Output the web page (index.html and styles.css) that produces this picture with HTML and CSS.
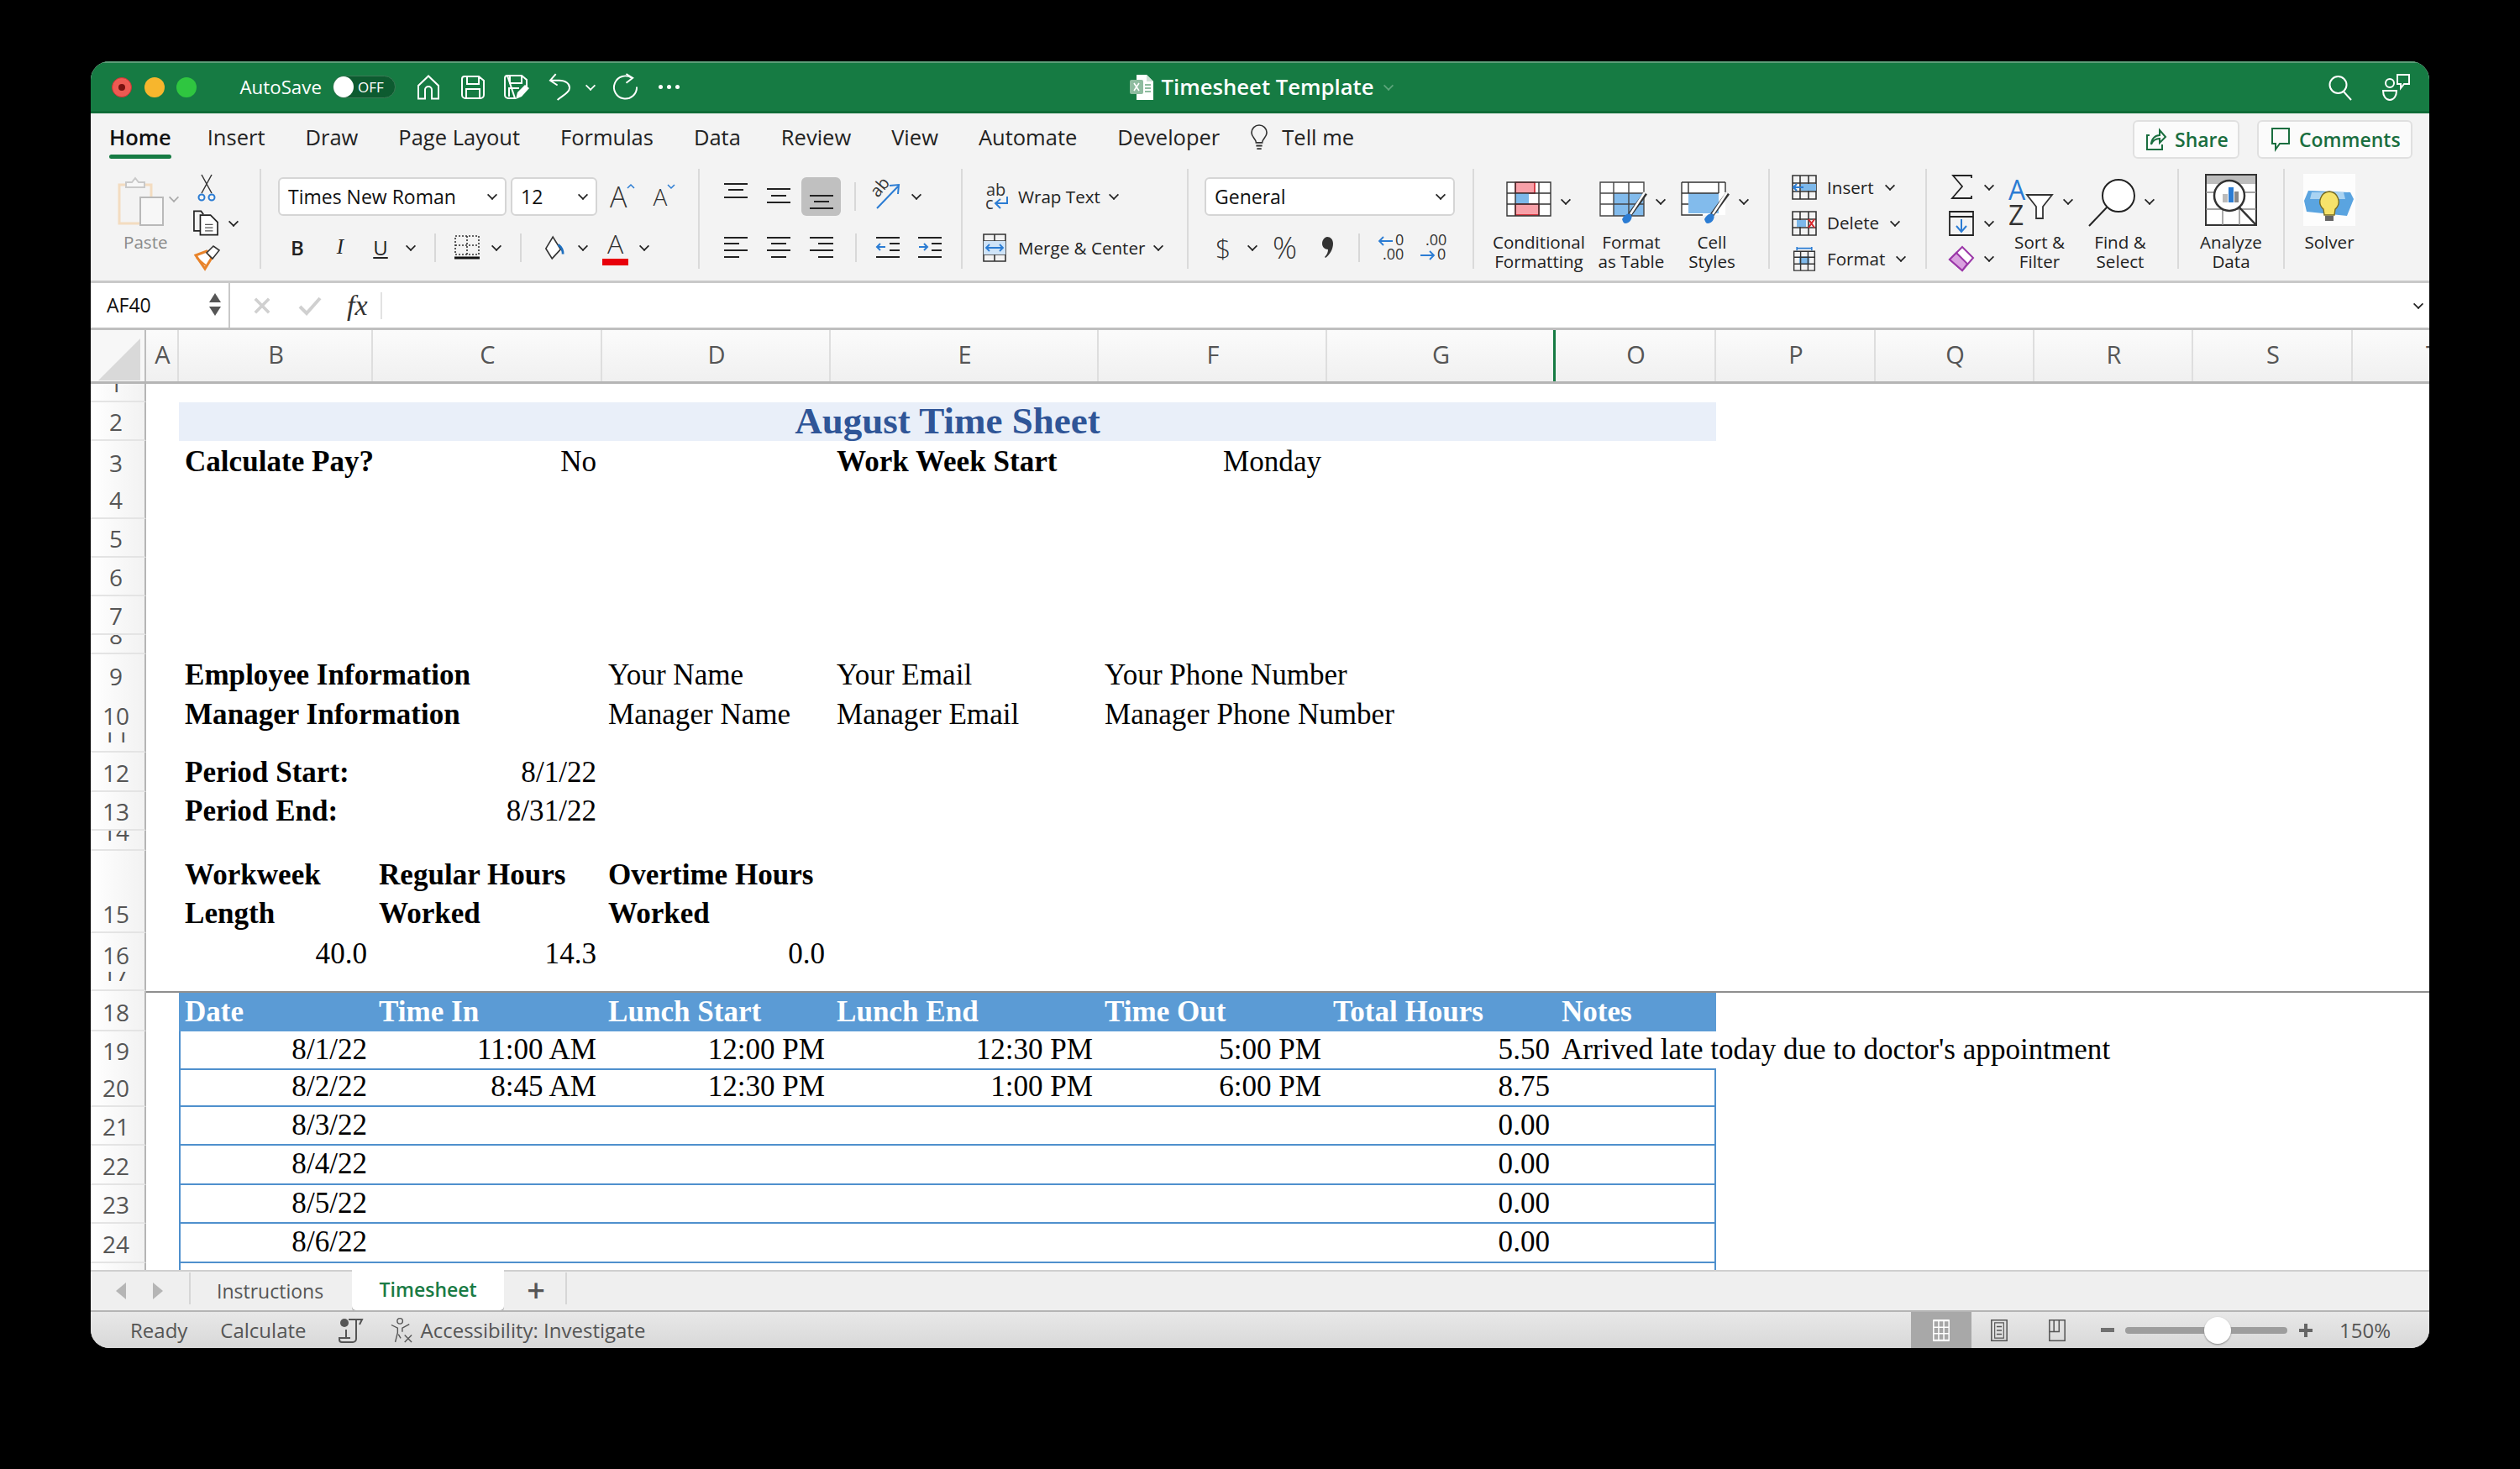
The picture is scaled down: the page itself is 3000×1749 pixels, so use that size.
FILE: index.html
```html
<!DOCTYPE html>
<html lang="en">
<head>
<meta charset="UTF-8">
<title>Timesheet Template</title>
<link rel="stylesheet" href="styles.css">
</head>
<body>

<svg class="defs" width="0" height="0">
  <symbol id="al-top" viewBox="0 0 28 46"><path d="M0 8h28M5 15h18M0 24h28" stroke="#222" stroke-width="2"/></symbol>
  <symbol id="al-mid" viewBox="0 0 28 46"><path d="M0 14h28M5 22h18M0 30h28" stroke="#222" stroke-width="2"/></symbol>
  <symbol id="al-bot" viewBox="0 0 28 46"><path d="M0 22h28M5 29h18M0 37h28" stroke="#222" stroke-width="2"/></symbol>
  <symbol id="al-left" viewBox="0 0 28 46"><path d="M0 11h28M0 18h18M0 26h28M0 34h18" stroke="#222" stroke-width="2"/></symbol>
  <symbol id="al-center" viewBox="0 0 28 46"><path d="M0 11h28M5 18h18M0 26h28M5 34h18" stroke="#222" stroke-width="2"/></symbol>
  <symbol id="al-right" viewBox="0 0 28 46"><path d="M0 11h28M10 18h18M0 26h28M10 34h18" stroke="#222" stroke-width="2"/></symbol>
  <symbol id="grid-ico" viewBox="0 0 30 30"><path d="M1 1h28v28H1zM1 10h28M1 20h28M10 1v28M20 1v28" fill="none" stroke="#333" stroke-width="1.6"/></symbol>
</svg>

<div class="window">

  <header class="titlebar">
    <div class="tb-left">
      <span class="light red"></span><span class="light yellow"></span><span class="light green"></span>
      <span class="autosave">AutoSave</span>
      <span class="toggle"><b></b><em>OFF</em></span>
      <svg class="tb-ico home" viewBox="0 0 28 30"><path d="M14 1.5 2 13v15.500h8V18a4 4 0 0 1 8 0v10.500h8V13z" fill="none" stroke="#fff" stroke-width="2"/></svg>
      <svg class="tb-ico save" viewBox="0 0 28 28"><path d="M4 1h17l6 5v17a4 4 0 0 1-4 4H5a4 4 0 0 1-4-4V4a3 3 0 0 1 3-3zM7 1v9h14V1M6 27V16h16v11" fill="none" stroke="#fff" stroke-width="2"/></svg>
      <svg class="tb-ico save2" viewBox="0 0 30 30"><path d="M4 1h17l6 5v8M13 28H5a4 4 0 0 1-4-4V4a3 3 0 0 1 3-3zM7 1v9h14V1M6 26V16h12" fill="none" stroke="#fff" stroke-width="2"/><path d="M14 29l2-8 9-9 5 4-9 10z" fill="#fff"/></svg>
      <svg class="tb-ico undo" viewBox="0 0 28 34"><path d="M9 1 2 9l9 6M2 9h11c8 0 13 4 13 9 0 6-9 10-15 15" fill="none" stroke="#fff" stroke-width="2"/></svg>
      <i class="chev white"></i>
      <svg class="tb-ico redo" viewBox="0 0 32 34"><path d="M24 6a14 14 0 1 0 6 11" fill="none" stroke="#fff" stroke-width="2"/><path d="M17 1l8 5-8 6" fill="none" stroke="#fff" stroke-width="2"/></svg>
      <span class="dots"><b></b><b></b><b></b></span>
    </div>
    <div class="tb-title">
      <svg class="doc" viewBox="0 0 28 30"><path d="M8 0h12l8 8v22H8z" fill="#fff"/><path d="M20 0l8 8h-8z" fill="#cfe2d6"/><rect y="6" width="16" height="17" rx="2" fill="#8fbca0"/><path d="M5 10l6 9M11 10l-6 9" stroke="#fff" stroke-width="1.600"/><path d="M18 12h7M18 16h7M18 20h7" stroke="#8fbca0" stroke-width="2"/></svg>
      <span>Timesheet Template</span>
      <i class="chev dim"></i>
    </div>
    <div class="tb-right">
      <svg class="tb-ico search" viewBox="0 0 28 30"><circle cx="11.500" cy="12" r="10" fill="none" stroke="#fff" stroke-width="2"/><path d="M18 20l9 10" stroke="#fff" stroke-width="2"/></svg>
      <svg class="tb-ico collab" viewBox="0 0 34 32"><path d="M18 1h14v11h-6l-4 5v-5h-4z" fill="none" stroke="#fff" stroke-width="2"/><circle cx="9" cy="11" r="5" fill="none" stroke="#fff" stroke-width="2"/><path d="M1 20h16c0 6-3 11-8 11s-8-5-8-11z" fill="none" stroke="#fff" stroke-width="2"/></svg>
    </div>
  </header>

  <section class="ribbon">
    <nav class="tabs">
      <a class="tab active">Home</a>
      <a class="tab">Insert</a>
      <a class="tab">Draw</a>
      <a class="tab">Page Layout</a>
      <a class="tab">Formulas</a>
      <a class="tab">Data</a>
      <a class="tab">Review</a>
      <a class="tab">View</a>
      <a class="tab">Automate</a>
      <a class="tab">Developer</a>
      <svg class="bulb" viewBox="0 0 22 32"><path d="M7 23c0-5-6-7-6-13a10 10 0 0 1 20 0c0 6-6 8-6 13z" fill="none" stroke="#333" stroke-width="1.800"/><path d="M7 27h8M8 31h6" stroke="#333" stroke-width="2"/></svg>
      <a class="tab tell">Tell me</a>
      <div class="tab-actions">
        <button class="action share"><svg viewBox="0 0 24 28"><path d="M4 9H1v17h18v-6" fill="none" stroke="#1a6e3f" stroke-width="2"/><path d="M6 20c0-7 5-11 10-11V3l7 8-7 7v-5c-5 0-8 2-10 7z" fill="none" stroke="#1a6e3f" stroke-width="2"/></svg>Share</button>
        <button class="action comments"><svg viewBox="0 0 24 28"><path d="M2 1h20v18H11l-5 7v-7H2z" fill="none" stroke="#1a6e3f" stroke-width="2"/></svg>Comments</button>
      </div>
    </nav>

    <div class="groups">

      <div class="group g-clip">
        <div class="paste">
          <div class="paste-top">
            <svg class="paste-ico" viewBox="0 0 54 58"><path d="M1 9h38v46H1z" fill="none" stroke="#f3dcc0" stroke-width="3"/><path d="M9 12V6h7l4-5 4 5h7v6z" fill="#f7f7f7" stroke="#c9c9c9" stroke-width="2"/><rect x="26" y="24" width="27" height="33" fill="#f7f7f7" stroke="#b9b9b9" stroke-width="2"/></svg>
            <i class="chev dimgray"></i>
          </div>
          <span class="paste-label">Paste</span>
        </div>
        <div class="clip-tools">
          <svg class="cut" viewBox="0 0 20 34"><path d="M4 23 16 1M16 23 4 1" stroke="#333" stroke-width="1.500" fill="none"/><circle cx="4" cy="28" r="3.500" fill="none" stroke="#2b7cd3" stroke-width="2"/><circle cx="16" cy="28" r="3.500" fill="none" stroke="#2b7cd3" stroke-width="2"/></svg>
          <div class="copy-row">
            <svg class="copy" viewBox="0 0 32 32"><path d="M9 26H1V1h9l3 4" fill="none" stroke="#222" stroke-width="1.800"/><path d="M9 6h13l9 9v16H9z" fill="#fff" stroke="#222" stroke-width="1.800"/><path d="M15 18h10M15 22h10M15 26h10" stroke="#555" stroke-width="1.500"/></svg>
            <i class="chev"></i>
          </div>
          <svg class="painter" viewBox="0 0 32 30"><path d="M3 12 16 7l6 8-8 13z" fill="#fff" stroke="#e8832a" stroke-width="3"/><path d="M4 15l11 9" stroke="#e8832a" stroke-width="2"/><path d="M16 9l8-8 7 5-8 10z" fill="#fff" stroke="#333" stroke-width="1.600"/></svg>
        </div>
      </div>

      <div class="group g-font rows">
        <div class="row row-a">
          <div class="box w-font">Times New Roman<i class="chev"></i></div>
          <div class="box w-size">12<i class="chev"></i></div>
          <span class="grow">A<svg viewBox="0 0 10 6"><path d="M1 5l4-4 4 4" fill="none" stroke="#2b7cd3" stroke-width="1.500"/></svg></span>
          <span class="shrink">A<svg viewBox="0 0 10 6"><path d="M1 1l4 4 4-4" fill="none" stroke="#2b7cd3" stroke-width="1.500"/></svg></span>
        </div>
        <div class="row row-b">
          <b class="fmt-b">B</b>
          <i class="fmt-i">I</i>
          <u class="fmt-u">U</u>
          <i class="chev m-22"></i>
          <span class="sep m-23"></span>
          <svg class="ico30 m-22" viewBox="0 0 30 30"><path d="M1 1h28v22H1zM15 1v22M1 12h28" fill="none" stroke="#333" stroke-width="1.600" stroke-dasharray="2 2"/><path d="M0 27h30" stroke="#111" stroke-width="3"/></svg>
          <i class="chev m-15"></i>
          <span class="sep m-23"></span>
          <svg class="fill m-27" viewBox="0 0 26 32"><path d="M11 2 2 17l8 13 11-12z" fill="#fff" stroke="#333" stroke-width="1.800"/><path d="M18 12c4 3 6 7 6 12" fill="none" stroke="#1e6fbf" stroke-width="3"/></svg>
          <i class="chev m-17"></i>
          <span class="color-a m-18">A</span>
          <i class="chev m-14"></i>
        </div>
      </div>

      <div class="group g-align rows">
        <div class="row row-a">
          <svg class="ico28"><use href="#al-top"/></svg>
          <svg class="ico28 m-23"><use href="#al-mid"/></svg>
          <span class="picked m-13"><svg class="ico28"><use href="#al-bot"/></svg></span>
          <span class="sep m-16"></span>
          <svg class="orient m-22" viewBox="0 0 32 30"><text class="ico-text" transform="translate(4 17) rotate(-50)">ab</text><path d="M3 29 28 3M18 2l11-1-1 11" fill="none" stroke="#2b7cd3" stroke-width="2"/></svg>
          <i class="chev m-13"></i>
        </div>
        <div class="row row-b">
          <svg class="ico28"><use href="#al-left"/></svg>
          <svg class="ico28 m-23"><use href="#al-center"/></svg>
          <svg class="ico28 m-23"><use href="#al-right"/></svg>
          <span class="sep m-26"></span>
          <svg class="ico28 m-23" viewBox="0 0 28 46"><path d="M0 11h28M16 18h12M16 26h12M0 34h28" stroke="#222" stroke-width="2"/><path d="M11 22H1M5 18l-4 4 4 4" fill="none" stroke="#2b7cd3" stroke-width="2"/></svg>
          <svg class="ico28 m-22" viewBox="0 0 28 46"><path d="M0 11h28M16 18h12M16 26h12M0 34h28" stroke="#222" stroke-width="2"/><path d="M1 22h10M7 18l4 4-4 4" fill="none" stroke="#2b7cd3" stroke-width="2"/></svg>
        </div>
      </div>

      <div class="group g-wrap rows">
        <div class="row row-a">
          <svg class="wrap-ico" viewBox="0 0 28 32"><text x="1" y="15" class="ico-text">ab</text><text x="0" y="31" class="ico-text">c</text><path d="M26 16v8H13M18 19l-6 5 6 6" fill="none" stroke="#2b7cd3" stroke-width="2"/></svg>
          <span class="small m-11">Wrap Text</span>
          <i class="chev m-11"></i>
        </div>
        <div class="row row-b">
          <svg class="merge-ico" viewBox="0 0 28 34"><path d="M1 1h26v32H1zM1 9h26M1 25h26M14 25v8M14 1v8" fill="none" stroke="#333" stroke-width="1.600"/><rect x="1" y="9" width="26" height="16" fill="#cfe4f8"/><path d="M4 17h20M8 13l-4 4 4 4M20 13l4 4-4 4" fill="none" stroke="#2b7cd3" stroke-width="1.800"/></svg>
          <span class="small m-14">Merge &amp; Center</span>
          <i class="chev m-11"></i>
        </div>
      </div>

      <div class="group g-num rows">
        <div class="row row-a">
          <div class="box w-general">General<i class="chev"></i></div>
        </div>
        <div class="row row-b">
          <span class="glyph dollar">$</span>
          <i class="chev m-23"></i>
          <span class="glyph pct m-19">%</span>
          <svg class="comma m-28" viewBox="0 0 14 25"><path d="M7 0c4 0 7 3 7 8 0 7-4 13-9 17l-1-1c3-3 4-6 4-9-4 0-7-3-7-7s3-8 6-8z" fill="#333"/></svg>
          <span class="sep m-30"></span>
          <svg class="dec m-21" viewBox="0 0 32 32"><text x="21" y="13" class="ico-num">0</text><text x="6" y="30" class="ico-num">.00</text><path d="M18 8H2M7 3 2 8l5 5" fill="none" stroke="#2b7cd3" stroke-width="1.800"/></svg>
          <svg class="dec m-18" viewBox="0 0 32 32"><text x="7" y="13" class="ico-num">.00</text><text x="21" y="30" class="ico-num">0</text><path d="M1 25h16M12 20l5 5-5 5" fill="none" stroke="#2b7cd3" stroke-width="1.800"/></svg>
        </div>
      </div>

      <div class="group g-styles">
        <div class="stack w-114">
          <div class="stack-top p-18">
            <svg class="big-ico" viewBox="0 0 54 42"><path d="M1 1h52v40H1z" fill="#fff"/><rect x="11" y="1" width="23" height="13" fill="#f8a0a8" stroke="#d0202a" stroke-width="1.600"/><rect x="11" y="14" width="16" height="13" fill="#7db8ea"/><rect x="11" y="27" width="28" height="13" fill="#f8a0a8" stroke="#d0202a" stroke-width="1.600"/><path d="M1 1h52v40H1zM11 1v40M39 1v40M1 14h52M1 27h52" fill="none" stroke="#333" stroke-width="1.400"/></svg>
            <i class="chev"></i>
          </div>
          <span class="small">Conditional<br>Formatting</span>
        </div>
        <div class="stack w-106">
          <div class="stack-top p-15">
            <svg class="big-ico2" viewBox="0 0 56 52"><path d="M1 1h52v40H1z" fill="#fff"/><rect x="17" y="14" width="36" height="27" fill="#82bbec"/><path d="M1 1h52v40H1zM17 1v40M35 1v40M1 14h52M1 27h52" fill="none" stroke="#444" stroke-width="1.400"/><path d="M55 14 36 40" stroke="#333" stroke-width="5"/><path d="M54 13 37 39" stroke="#fff" stroke-width="2.500"/><path d="M27 45c3-6 8-8 11-5 2 4-2 10-7 10-2 0-3-2-4-5z" fill="#2b7cd3"/></svg>
            <i class="chev"></i>
          </div>
          <span class="small">Format<br>as Table</span>
        </div>
        <div class="stack w-86">
          <div class="stack-top p-6">
            <svg class="big-ico3" viewBox="0 0 58 52"><path d="M1 1h52v39H1z" fill="#fff"/><rect x="9" y="14" width="36" height="24" fill="#82bbec"/><path d="M1 1v39h25M1 14h44M53 1v12M1 1h52M9 1v13M45 1v13M1 27h8" fill="none" stroke="#333" stroke-width="1.400"/><path d="M56 14 37 40" stroke="#333" stroke-width="5"/><path d="M55 13 38 39" stroke="#fff" stroke-width="2.500"/><path d="M28 45c3-6 8-8 11-5 2 4-2 10-7 10-2 0-3-2-4-5z" fill="#2b7cd3"/></svg>
            <i class="chev"></i>
          </div>
          <span class="small">Cell<br>Styles</span>
        </div>
      </div>

      <div class="group g-cells">
        <div class="cell-row">
          <svg class="ico30" viewBox="0 0 30 30"><use href="#grid-ico"/><rect x="11" y="11" width="18" height="8" fill="#7db8ea"/><path d="M14 15H2M6 11l-4 4 4 4" fill="none" stroke="#2b7cd3" stroke-width="2"/></svg>
          <span class="small m-12">Insert</span><i class="chev m-14"></i>
        </div>
        <div class="cell-row">
          <svg class="ico30" viewBox="0 0 30 30"><use href="#grid-ico"/><rect x="6" y="11" width="11" height="8" fill="#7db8ea"/><path d="M20 10l7 10M27 10l-7 10" stroke="#d9262c" stroke-width="2"/></svg>
          <span class="small m-12">Delete</span><i class="chev m-14"></i>
        </div>
        <div class="cell-row">
          <svg class="ico30" viewBox="0 0 30 34"><path d="M5 3h20M5 1v5M25 1v5" stroke="#2b7cd3" stroke-width="1.800"/><rect x="8" y="14" width="14" height="11" fill="#7db8ea"/><path d="M1 7h28v26H1zM1 15h28M1 24h28M10 7v26M20 7v26" fill="none" stroke="#333" stroke-width="1.600"/></svg>
          <span class="small m-12">Format</span><i class="chev m-14"></i>
        </div>
      </div>

      <div class="group g-edit">
        <div class="edit-col">
          <div class="cell-row">
            <svg class="ico30" viewBox="0 0 30 30"><path d="M27 4V1H5l11 13L4 28h23v-3" fill="none" stroke="#222" stroke-width="1.800"/></svg>
            <i class="chev m-13"></i>
          </div>
          <div class="cell-row">
            <svg class="ico30" viewBox="0 0 30 30"><path d="M1 1h28v28H1zM1 7h28" fill="none" stroke="#222" stroke-width="1.800"/><path d="M15 10v14M9 18l6 7 6-7" fill="none" stroke="#2b7cd3" stroke-width="2"/></svg>
            <i class="chev m-13"></i>
          </div>
          <div class="cell-row">
            <svg class="ico30" viewBox="0 0 30 30"><path d="M16 1l13 13-13 15L1 16z" fill="#fff" stroke="#9b37a8" stroke-width="2"/><path d="M1 16l8-8 13 13-6 8z" fill="#d9a0df" stroke="#9b37a8" stroke-width="2"/></svg>
            <i class="chev m-13"></i>
          </div>
        </div>
        <div class="stack w-86">
          <div class="stack-top p-6">
            <svg class="sort-ico" viewBox="0 0 54 56"><text x="0" y="26" class="ico-az blue">A</text><text x="0" y="56" class="ico-az">Z</text><path d="M22 20h30L41 34v14h-8V34z" fill="#fff" stroke="#333" stroke-width="1.800"/></svg>
            <i class="chev"></i>
          </div>
          <span class="small">Sort &amp;<br>Filter</span>
        </div>
        <div class="stack w-106">
          <div class="stack-top p-15">
            <svg class="find-ico" viewBox="0 0 56 58"><circle cx="36" cy="21" r="19" fill="#fff" stroke="#222" stroke-width="2"/><path d="M22 35 1 57" stroke="#222" stroke-width="2"/></svg>
            <i class="chev"></i>
          </div>
          <span class="small">Find &amp;<br>Select</span>
        </div>
      </div>

      <div class="group g-analyze">
        <div class="stack w-full">
          <svg class="tool-ico" viewBox="0 0 62 62"><rect x="1" y="1" width="60" height="60" fill="#fff" stroke="#333" stroke-width="2"/><rect x="2" y="2" width="58" height="10" fill="#bdbdbd"/><path d="M1 22h60M1 42h60M21 42v19M41 42v19" stroke="#888" stroke-width="1.400"/><circle cx="29" cy="26" r="18" fill="#fff" stroke="#333" stroke-width="2.500"/><rect x="21" y="24" width="6" height="10" fill="#bbb"/><rect x="28" y="16" width="6" height="18" fill="#2b7cd3"/><rect x="35" y="21" width="5" height="13" fill="#888"/><path d="M41 40 60 60" stroke="#333" stroke-width="2.500"/></svg>
          <span class="small">Analyze<br>Data</span>
        </div>
      </div>

      <div class="g-solver">
        <div class="stack w-full">
          <svg class="tool-ico" viewBox="0 0 62 62"><rect width="62" height="62" fill="#fdfdfd"/><path d="M6 20 56 22 60 30 52 50 4 45 1 32z" fill="#5aa4e0"/><path d="M10 22h38l2 8H8z" fill="#a9d3f2"/><path d="M31 21a12 12 0 0 1 7 21l-1 7H25l-1-7a12 12 0 0 1 7-21z" fill="#f6e36b" stroke="#776b20" stroke-width="1.400"/><path d="M26 50h10v6H26z" fill="#666"/></svg>
          <span class="small">Solver</span>
        </div>
      </div>

    </div>
  </section>

  <div class="formula">
    <div class="namebox">AF40<span class="stepper"><b></b><em></em></span></div>
    <svg class="fx-x" viewBox="0 0 22 22"><path d="M2 2l18 18M20 2 2 20" stroke="#d0d0d0" stroke-width="4"/></svg>
    <svg class="fx-ok" viewBox="0 0 28 22"><path d="M2 12l8 8L26 2" fill="none" stroke="#d0d0d0" stroke-width="4"/></svg>
    <span class="fx">fx</span>
    <span class="fx-sep"></span>
    <i class="chev fx-more"></i>
  </div>

  <div class="colhead cols">
    <div class="corner"><svg viewBox="0 0 50 50"><path d="M50 0v50H0z" fill="#d9d9d9"/></svg></div>
    <div class="col">A</div><div class="col">B</div><div class="col">C</div><div class="col">D</div>
    <div class="col">E</div><div class="col">F</div><div class="col col-g">G</div><div class="col">O</div>
    <div class="col">P</div><div class="col">Q</div><div class="col">R</div><div class="col">S</div><div class="col">T</div>
  </div>

  <main class="sheet">
    <div class="line cols h22"><div class="num">1</div></div>
    <div class="line cols h46">
      <div class="num">2</div><div></div>
      <div class="title-cell">August Time Sheet</div>
    </div>
    <div class="line cols h46 nudge">
      <div class="num">3</div><div></div>
      <div class="cell bold">Calculate Pay?</div><div class="cell right">No</div><div></div>
      <div class="cell bold">Work Week Start</div><div class="cell right">Monday</div>
    </div>
    <div class="line cols h46"><div class="num">4</div></div>
    <div class="line cols h46"><div class="num">5</div></div>
    <div class="line cols h46"><div class="num">6</div></div>
    <div class="line cols h46"><div class="num">7</div></div>
    <div class="line cols h23"><div class="num">8</div></div>
    <div class="line cols h47 nudge">
      <div class="num">9</div><div></div>
      <div class="cell bold">Employee Information</div><div></div>
      <div class="cell">Your Name</div><div class="cell">Your Email</div><div class="cell">Your Phone Number</div>
    </div>
    <div class="line cols h46 nudge">
      <div class="num">10</div><div></div>
      <div class="cell bold">Manager Information</div><div></div>
      <div class="cell">Manager Name</div><div class="cell">Manager Email</div><div class="cell">Manager Phone Number</div>
    </div>
    <div class="line cols h24"><div class="num">11</div></div>
    <div class="line cols h46">
      <div class="num">12</div><div></div>
      <div class="cell bold">Period Start:</div><div class="cell right">8/1/22</div>
    </div>
    <div class="line cols h46">
      <div class="num">13</div><div></div>
      <div class="cell bold">Period End:</div><div class="cell right">8/31/22</div>
    </div>
    <div class="line cols h24"><div class="num">14</div></div>
    <div class="line cols h98">
      <div class="num">15</div><div></div>
      <div class="cell bold">Workweek<br>Length</div><div class="cell bold">Regular Hours<br>Worked</div><div class="cell bold">Overtime Hours<br>Worked</div>
    </div>
    <div class="line cols h46 nudge">
      <div class="num">16</div><div></div>
      <div class="cell right">40.0</div><div class="cell right">14.3</div><div class="cell right">0.0</div>
    </div>
    <div class="line cols h23"><div class="num">17</div></div>
    <div class="line cols h48 frozen">
      <div class="num">18</div><div></div>
      <div class="cell head">Date</div><div class="cell head">Time In</div><div class="cell head">Lunch Start</div><div class="cell head">Lunch End</div><div class="cell head">Time Out</div><div class="cell head">Total Hours</div><div class="cell head">Notes</div>
    </div>
    <div class="line cols h44">
      <div class="num">19</div><div></div>
      <div class="cell right data first">8/1/22</div><div class="cell right data">11:00 AM</div><div class="cell right data">12:00 PM</div><div class="cell right data">12:30 PM</div><div class="cell right data">5:00 PM</div><div class="cell right data">5.50</div><div class="cell data">Arrived late today due to doctor's appointment</div>
    </div>
    <div class="line cols h46">
      <div class="num">20</div><div></div>
      <div class="cell right data first">8/2/22</div><div class="cell right data">8:45 AM</div><div class="cell right data">12:30 PM</div><div class="cell right data">1:00 PM</div><div class="cell right data">6:00 PM</div><div class="cell right data">8.75</div><div class="cell data last"></div>
    </div>
    <div class="line cols h46">
      <div class="num">21</div><div></div>
      <div class="cell right data first">8/3/22</div><div class="cell data"></div><div class="cell data"></div><div class="cell data"></div><div class="cell data"></div><div class="cell right data">0.00</div><div class="cell data last"></div>
    </div>
    <div class="line cols h47">
      <div class="num">22</div><div></div>
      <div class="cell right data first">8/4/22</div><div class="cell data"></div><div class="cell data"></div><div class="cell data"></div><div class="cell data"></div><div class="cell right data">0.00</div><div class="cell data last"></div>
    </div>
    <div class="line cols h46">
      <div class="num">23</div><div></div>
      <div class="cell right data first">8/5/22</div><div class="cell data"></div><div class="cell data"></div><div class="cell data"></div><div class="cell data"></div><div class="cell right data">0.00</div><div class="cell data last"></div>
    </div>
    <div class="line cols h46">
      <div class="num">24</div><div></div>
      <div class="cell right data first">8/6/22</div><div class="cell data"></div><div class="cell data"></div><div class="cell data"></div><div class="cell data"></div><div class="cell right data">0.00</div><div class="cell data last"></div>
    </div>
    <div class="line cols h10">
      <div class="num"></div><div></div>
      <div class="stub"></div>
    </div>
  </main>

  <div class="sheettabs">
    <span class="arrow left"></span>
    <span class="arrow right"></span>
    <span class="tsep tsep-a"></span>
    <span class="stab">Instructions</span>
    <span class="stab current">Timesheet</span>
    <span class="plus">+</span>
    <span class="tsep tsep-b"></span>
  </div>

  <footer class="status">
    <span class="st-ready">Ready</span>
    <span class="st-calc">Calculate</span>
    <svg class="st-macro" viewBox="0 0 28 30"><circle cx="6" cy="6" r="5" fill="#555"/><path d="M11 2h16l-3 6M20 3v22a4 4 0 0 1-4 4H3a3 3 0 0 1-3-3v-2h13" fill="none" stroke="#555" stroke-width="2"/><path d="M8 14v10" stroke="#555" stroke-width="2"/></svg>
    <svg class="st-acc" viewBox="0 0 28 32"><circle cx="12" cy="4" r="3.500" fill="none" stroke="#555" stroke-width="1.500"/><path d="M1 9l8 4v6l-3 12M24 8l-9 5v5M18 22l9 9M27 22l-9 9M10 21l3 5" fill="none" stroke="#555" stroke-width="1.500"/></svg>
    <span class="st-text">Accessibility: Investigate</span>
    <div class="st-right">
      <span class="view on"><svg viewBox="0 0 26 34"><rect width="26" height="34" rx="1" fill="#fff"/><path d="M2 3h6v8H2zM10 3h6v8h-6zM18 3h6v8h-6zM2 13h6v8H2zM10 13h6v8h-6zM18 13h6v8h-6zM2 23h6v8H2zM10 23h6v8h-6zM18 23h6v8h-6z" fill="#a6a6a6"/></svg></span>
      <span class="view"><svg viewBox="0 0 26 34"><path d="M1 1h24v32H1z" fill="none" stroke="#555" stroke-width="2"/><path d="M6 5h14v24H6z" fill="none" stroke="#555" stroke-width="1.500"/><path d="M9 11h8M9 17h8M9 23h8" stroke="#555" stroke-width="2"/></svg></span>
      <span class="view"><svg viewBox="0 0 26 34"><path d="M1 1h24v32H1zM1 19h15V1M8 1v18" fill="none" stroke="#555" stroke-width="2"/></svg></span>
      <span class="zoom-minus"></span>
      <span class="slider"><b></b></span>
      <span class="zoom-plus"></span>
      <span class="zoom-pct">150%</span>
    </div>
  </footer>

</div>

</body>
</html>
```
FILE: styles.css
```css
*{box-sizing:border-box;}
html,body{margin:0;padding:0;}
body{
    background:#000;
    width:3000px;
    height:1749px;
    padding:73px 108px 0;
    overflow:hidden;
    font-family:"Open Sans",sans-serif;
    color:#222;
}
.defs{position:absolute;}
svg{display:block;flex:none;overflow:visible;}

.window{
    width:2784px;
    height:1532px;
    border-radius:22px;
    overflow:hidden;
    background:#fff;
    display:flex;
    flex-direction:column;
}

/* small chevron used everywhere */
.chev{
    display:block;
    flex:none;
    width:10px;
    height:10px;
    margin-top:-4px;
    border-right:2px solid #222;
    border-bottom:2px solid #222;
    transform:rotate(45deg) scale(.85);
}
.chev.white{border-color:#fff;}
.chev.dim{border-color:#5ea67d;}
.chev.dimgray{border-color:#aaa;}

/* title bar */
.titlebar{
    height:62px;
    flex:none;
    background:#167b43;
    border-top:2px solid #5d9e79;
    border-bottom:3px solid #0f6c38;
    display:flex;
    align-items:center;
    color:#fff;
}
.tb-left,.tb-right{flex:1 1 0;display:flex;align-items:center;}
.tb-left{padding-left:25px;}
.tb-right{justify-content:flex-end;padding-right:22px;}
.light{width:24px;height:24px;border-radius:50%;margin-right:14.500px;flex:none;position:relative;}
.light.red{background:#ee5a52;border:1px solid #c33;}
.light.red::after{content:"";position:absolute;left:7px;top:7px;width:8px;height:8px;border-radius:50%;background:#7a1210;}
.light.yellow{background:#f7b62d;}
.light.green{background:#2fc640;}
.autosave{font-size:22.300px;margin-left:37px;}
.toggle{
    width:75px;height:27px;margin-left:13px;flex:none;
    border-radius:14px;background:#0d5b30;border:1px solid #3b7a55;
    display:flex;align-items:center;
}
.toggle b{width:24px;height:25px;border-radius:50%;background:#fff;display:block;flex:none;}
.toggle em{font-style:normal;font-size:17px;margin-left:5px;}
.tb-ico.home{width:28px;height:30px;margin-left:25px;}
.tb-ico.save{width:28px;height:28px;margin-left:25px;}
.tb-ico.save2{width:30px;height:30px;margin-left:23px;}
.tb-ico.undo{width:27px;height:33px;margin-left:23px;}
.titlebar .chev.white{margin-left:18px;margin-right:21px;}
.tb-ico.redo{width:31px;height:33px;}
.dots{display:flex;gap:5px;margin-left:24px;}
.dots b{width:5px;height:5px;border-radius:50%;background:#fff;display:block;}
.tb-title{display:flex;align-items:center;flex:none;font-size:25.700px;font-weight:600;}
.tb-title .doc{width:28px;height:30px;margin-right:9px;}
.tb-title .chev{margin-left:12px;}
.tb-ico.search{width:28px;height:30px;margin-right:36px;}
.tb-ico.collab{width:34px;height:32px;}

/* ribbon */
.ribbon{
    height:202px;
    flex:none;
    background:#f3f3f3;
    border-bottom:3px solid #c9c9c9;
}
.tabs{
    height:66px;
    display:flex;
    align-items:flex-start;
    padding-left:22px;
    gap:48px;
    font-size:25.500px;
    color:#222;
}
.tab{display:block;height:54px;line-height:56px;position:relative;}
.tab.active{font-weight:600;color:#111;margin-right:-5px;}
.tab.active::after{
    content:"";position:absolute;left:0;right:0;bottom:0;height:5px;border-radius:3px;background:#167b43;
}
.bulb{width:20px;height:29px;margin-left:-11px;margin-top:14px;}
.tab.tell{margin-left:-31px;}
.tab-actions{margin-left:auto;margin-right:20px;display:flex;gap:21px;margin-top:8px;}
.action{
    height:46px;
    background:#fbfbfb;
    border:2px solid #e0e0e0;
    border-radius:6px;
    color:#1a6e3f;
    font:600 23px "Open Sans",sans-serif;
    display:flex;
    align-items:center;
    padding:0 10px 0 14px;
}
.action svg{width:24px;height:28px;margin-right:10px;}
.action.share{width:127px;}
.action.comments{width:185px;}

.groups{display:flex;height:119px;}
.group{border-right:2px solid #dadada;flex:none;height:119px;}
.rows{display:flex;flex-direction:column;padding-top:10px;gap:15px;}
.row{height:46px;display:flex;align-items:center;}

.g-clip{width:203px;padding-left:33px;display:flex;}
.paste{width:66px;flex:none;}
.paste-top{display:flex;align-items:center;margin-top:10px;height:58px;}
.paste-ico{width:54px;height:58px;}
.paste-top .chev{margin-left:7px;margin-top:-10px;}
.paste-label{display:block;margin-top:6px;margin-left:6px;font-size:20.600px;color:#8a8a8a;line-height:26px;}
.clip-tools{margin-left:23px;padding-top:6px;}
.cut{width:20px;height:34px;margin-left:6px;}
.copy-row{display:flex;align-items:center;margin-top:9px;}
.copy{width:30px;height:31px;}
.copy-row .chev{margin-left:13px;}
.painter{width:32px;height:30px;margin-top:11px;}

.g-font{width:522px;}
.g-font .row-a{padding-left:20px;}
.g-font .row-b{padding-left:35px;}
.box{
    height:46px;
    background:#fff;
    border:2px solid #d5d5d5;
    border-radius:6px;
    display:flex;
    align-items:center;
    justify-content:space-between;
    padding:0 10px 0 10px;
    font-size:23px;
    color:#111;
    flex:none;
}
.w-font{width:272px;}
.w-size{width:103px;margin-left:5px;}
.w-general{width:298px;}
.grow,.shrink{font-size:34px;color:#333;display:flex;align-items:flex-start;line-height:42px;font-weight:300;}
.grow{margin-left:15px;}
.shrink{margin-left:21px;font-size:28px;}
.grow svg,.shrink svg{width:10px;height:6px;margin-top:6px;}
.fmt-b{font-size:24px;width:16px;font-weight:600;margin-top:-2px;}
.fmt-i{font:italic 25px "Liberation Serif",serif;width:14px;margin-left:36px;text-align:center;margin-top:-2px;}
.fmt-u{font-size:24px;width:18px;margin-left:32px;text-align:center;margin-top:-2px;}
.sep{width:2px;height:34px;background:#d8d8d8;flex:none;display:block;}
.ico30{width:30px;height:30px;}
.ico28{width:28px;height:46px;}
.fill{width:24px;height:30px;}
.color-a{
    width:31px;height:42px;text-align:center;font-size:32px;line-height:32px;
    border-bottom:8px solid #e8000b;flex:none;color:#333;font-weight:300;
}
.m-11{margin-left:11px;}
.m-12{margin-left:12px;}
.m-13{margin-left:13px;}
.m-14{margin-left:14px;}
.m-15{margin-left:15px;}
.m-16{margin-left:16px;}
.m-17{margin-left:17px;}
.m-18{margin-left:18px;}
.m-19{margin-left:19px;}
.m-21{margin-left:21px;}
.m-22{margin-left:22px;}
.m-23{margin-left:23px;}
.m-26{margin-left:26px;}
.m-27{margin-left:27px;}
.m-28{margin-left:28px;}
.m-30{margin-left:30px;}

.g-align{width:313px;}
.g-align .row{padding-left:29px;}
.picked{width:47px;height:46px;background:#c0c0c0;border-radius:6px;display:flex;align-items:center;justify-content:center;flex:none;}
.orient{width:32px;height:30px;}

.g-wrap{width:269px;}
.g-wrap .row-a{padding-left:27px;}
.g-wrap .row-b{padding-left:24px;}
.wrap-ico{width:28px;height:32px;}
.merge-ico{width:28px;height:34px;}
.ico-text{font:20px "Open Sans",sans-serif;fill:#333;}
.ico-num{font:18px "Open Sans",sans-serif;fill:#333;}
.ico-az{font:32px "Open Sans",sans-serif;fill:#333;}
.ico-az.blue{fill:#2b7cd3;}
.small{font-size:20.600px;line-height:23px;color:#222;text-align:center;white-space:nowrap;display:block;}

.g-num{width:340px;}
.g-num .row-a{padding-left:19px;}
.g-num .row-b{padding-left:32px;}
.glyph{color:#333;line-height:40px;display:block;flex:none;font-weight:300;}
.dollar{width:16px;font-size:32px;}
.pct{width:30px;font-size:36px;}
.comma{width:14px;height:25px;margin-top:-2px;}
.dec{width:32px;height:32px;}

.g-styles{width:352px;display:flex;padding-left:20px;}
.stack{flex:none;display:flex;flex-direction:column;align-items:center;}
.stack-top{height:69px;flex:none;display:flex;align-items:flex-start;gap:12px;align-self:flex-start;}
.stack-top .chev{margin-top:32px;}
.p-18{padding-left:18px;}
.p-15{padding-left:15px;}
.p-6{padding-left:6px;}
.w-114{width:114px;}
.w-106{width:106px;}
.w-86{width:86px;}
.w-full{width:100%;}
.big-ico{width:54px;height:42px;margin-top:15px;}
.big-ico2{width:56px;height:52px;margin-top:15px;}
.big-ico3{width:58px;height:52px;margin-top:15px;}
.stack .small{margin-top:7px;flex:none;}

.g-cells{width:187px;padding:7px 0 0 26px;display:flex;flex-direction:column;gap:12.500px;}
.cell-row{height:30px;display:flex;align-items:center;flex:none;}

.g-edit{width:300px;display:flex;}
.edit-col{width:91px;flex:none;padding:7px 0 0 26px;display:flex;flex-direction:column;gap:12.500px;}
.sort-ico{width:54px;height:56px;margin-top:11px;}
.find-ico{width:56px;height:58px;margin-top:11px;}

.g-analyze{width:126px;}
.g-solver{width:106px;flex:none;margin-left:0;}
.tool-ico{width:62px;height:62px;margin-top:6px;margin-bottom:1px;}

/* formula bar */
.formula{
    height:56px;
    flex:none;
    background:#fff;
    border-bottom:3px solid #bfbfbf;
    display:flex;
    align-items:center;
}
.namebox{
    width:166px;
    height:53px;
    flex:none;
    border-right:2px solid #c9c9c9;
    padding-left:19px;
    padding-right:9px;
    padding-bottom:2px;
    font-size:23px;
    color:#111;
    display:flex;
    align-items:center;
    justify-content:space-between;
}
.stepper b,.stepper em{display:block;width:0;height:0;border-left:7px solid transparent;border-right:7px solid transparent;}
.stepper b{border-bottom:11px solid #555;margin-bottom:5px;}
.stepper em{border-top:11px solid #555;}
.fx-x{width:20px;height:20px;margin-left:28px;}
.fx-ok{width:28px;height:22px;margin-left:33px;}
.fx{font:italic 34px "Liberation Serif",serif;color:#333;margin-left:30px;line-height:40px;}
.fx-sep{width:2px;height:32px;background:#e2e2e2;margin-left:15px;}
.fx-more{margin-left:auto;margin-right:8px;}

/* columns */
.cols{
    display:grid;
    grid-template-columns:66px 39px 231px 273px 272px 319px 272px 272px 191px 190px 189px 189px 190px 190px;
}
.colhead{
    height:64px;
    flex:none;
    border-bottom:3px solid #b5b5b5;
    background:linear-gradient(#fbfbfb,#f0f0f0);
}
.corner{border-right:2px solid #bdbdbd;padding:10px 5px 0 9px;background:#f7f7f7;}
.corner svg{width:50px;height:50px;}
.col{
    font-size:29px;
    color:#555;
    text-align:center;
    line-height:58px;
    padding-left:2px;
    border-right:2px solid #dedede;
}
.col-g{border-right:3px solid #167b43;}

/* sheet */
.sheet{height:1055px;flex:none;overflow:hidden;background:#fff;}
.line{font:35.100px "Liberation Serif",serif;color:#000;}
.h10{height:10px;}
.h22{height:22px;}
.h23{height:23px;}
.h24{height:24px;}
.h44{height:44px;}
.h46{height:46.200px;}
.h47{height:47px;}
.h48{height:48px;}
.h98{height:98px;}
.num{
    font-family:"Open Sans",sans-serif;
    font-size:28px;
    line-height:42px;
    color:#555;
    text-align:center;
    height:100%;
    overflow:hidden;
    display:flex;
    align-items:flex-end;
    justify-content:center;
    padding-right:4px;
    background:linear-gradient(90deg,#fff,#f2f2f2);
    border-right:2px solid #b5b5b5;
    border-bottom:2px solid #e4e4e4;
}
.cell{
    padding:0 7px;
    line-height:46px;
    white-space:nowrap;
    align-self:end;
    min-width:0;
}
.nudge .cell{align-self:start;line-height:49px;}
.cell.right{text-align:right;}
.bold{font-weight:bold;}
.title-cell{
    grid-column:span 7;
    background:#e9eff9;
    color:#2f5597;
    font-weight:bold;
    font-size:45px;
    line-height:44px;
    text-align:center;
    white-space:nowrap;
}
.frozen{box-shadow:inset 0 2px 0 #8f8f8f;}
.head{background:#5b9bd5;color:#fff;font-weight:bold;align-self:stretch;margin-top:2px;}
.data{height:100%;border-bottom:2px solid #4f90cd;line-height:44px;padding-right:7px;}
.first{border-left:2px solid #4f90cd;}
.last{border-right:2px solid #4f90cd;}
.stub{grid-column:span 7;border-left:2px solid #4f90cd;border-right:2px solid #4f90cd;}

/* sheet tabs */
.sheettabs{
    height:50px;
    flex:none;
    background:#efefef;
    border-top:2px solid #cfcfcf;
    border-bottom:2px solid #b5b5b5;
    display:flex;
    align-items:center;
    font-size:23px;
    color:#555;
}
.arrow{width:0;height:0;border-top:10px solid transparent;border-bottom:10px solid transparent;flex:none;}
.arrow.left{border-right:12px solid #b5b5b5;margin-left:30px;}
.arrow.right{border-left:12px solid #b5b5b5;margin-left:32px;}
.tsep{width:2px;height:38px;background:#d6d6d6;flex:none;margin-top:-6px;}
.tsep-a{margin-left:31px;}
.tsep-b{margin-left:24px;}
.stab{margin-left:31px;flex:none;}
.stab.current{
    margin-left:34px;
    width:181px;
    height:50px;
    margin-top:-4px;
    margin-bottom:0;
    background:#fff;
    border-radius:0 0 5px 5px;
    box-shadow:0 2px 0 #b5b5b5;
    color:#1a7b45;
    font-weight:600;
    text-align:center;
    line-height:50px;
}
.plus{font-size:38px;color:#555;margin-left:27px;line-height:40px;margin-top:-4px;font-weight:600;}

/* status bar */
.status{
    height:43px;
    flex:none;
    background:linear-gradient(#e8e8e8,#d8d8d8);
    display:flex;
    align-items:center;
    font-size:24px;
    color:#555;
    padding-left:47px;
}
.st-calc{margin-left:39px;}
.st-macro{width:28px;height:30px;margin-left:39px;}
.st-acc{width:26px;height:30px;margin-left:33px;}
.st-text{margin-left:10px;}
.st-right{margin-left:auto;display:flex;align-items:center;height:100%;}
.view{width:72px;height:100%;display:flex;align-items:center;justify-content:center;flex:none;}
.view.on{background:#a8a8a8;}
.view svg{width:26px;height:26px;}
.view + .view{margin-left:-3px;}
.zoom-minus{width:16px;height:5px;background:#707070;margin-left:16px;flex:none;}
.slider{
    width:193px;height:8px;border-radius:4px;background:#9d9d9d;margin-left:13px;position:relative;flex:none;
}
.slider b{position:absolute;left:94px;top:-12px;width:32px;height:32px;border-radius:50%;background:#fff;box-shadow:0 1px 2px #888;}
.zoom-plus{width:16px;height:16px;margin-left:14px;flex:none;
    background:linear-gradient(#666,#666) center/16px 4px no-repeat,linear-gradient(#666,#666) center/4px 16px no-repeat;}
.zoom-pct{margin-left:32px;margin-right:46px;}
```
